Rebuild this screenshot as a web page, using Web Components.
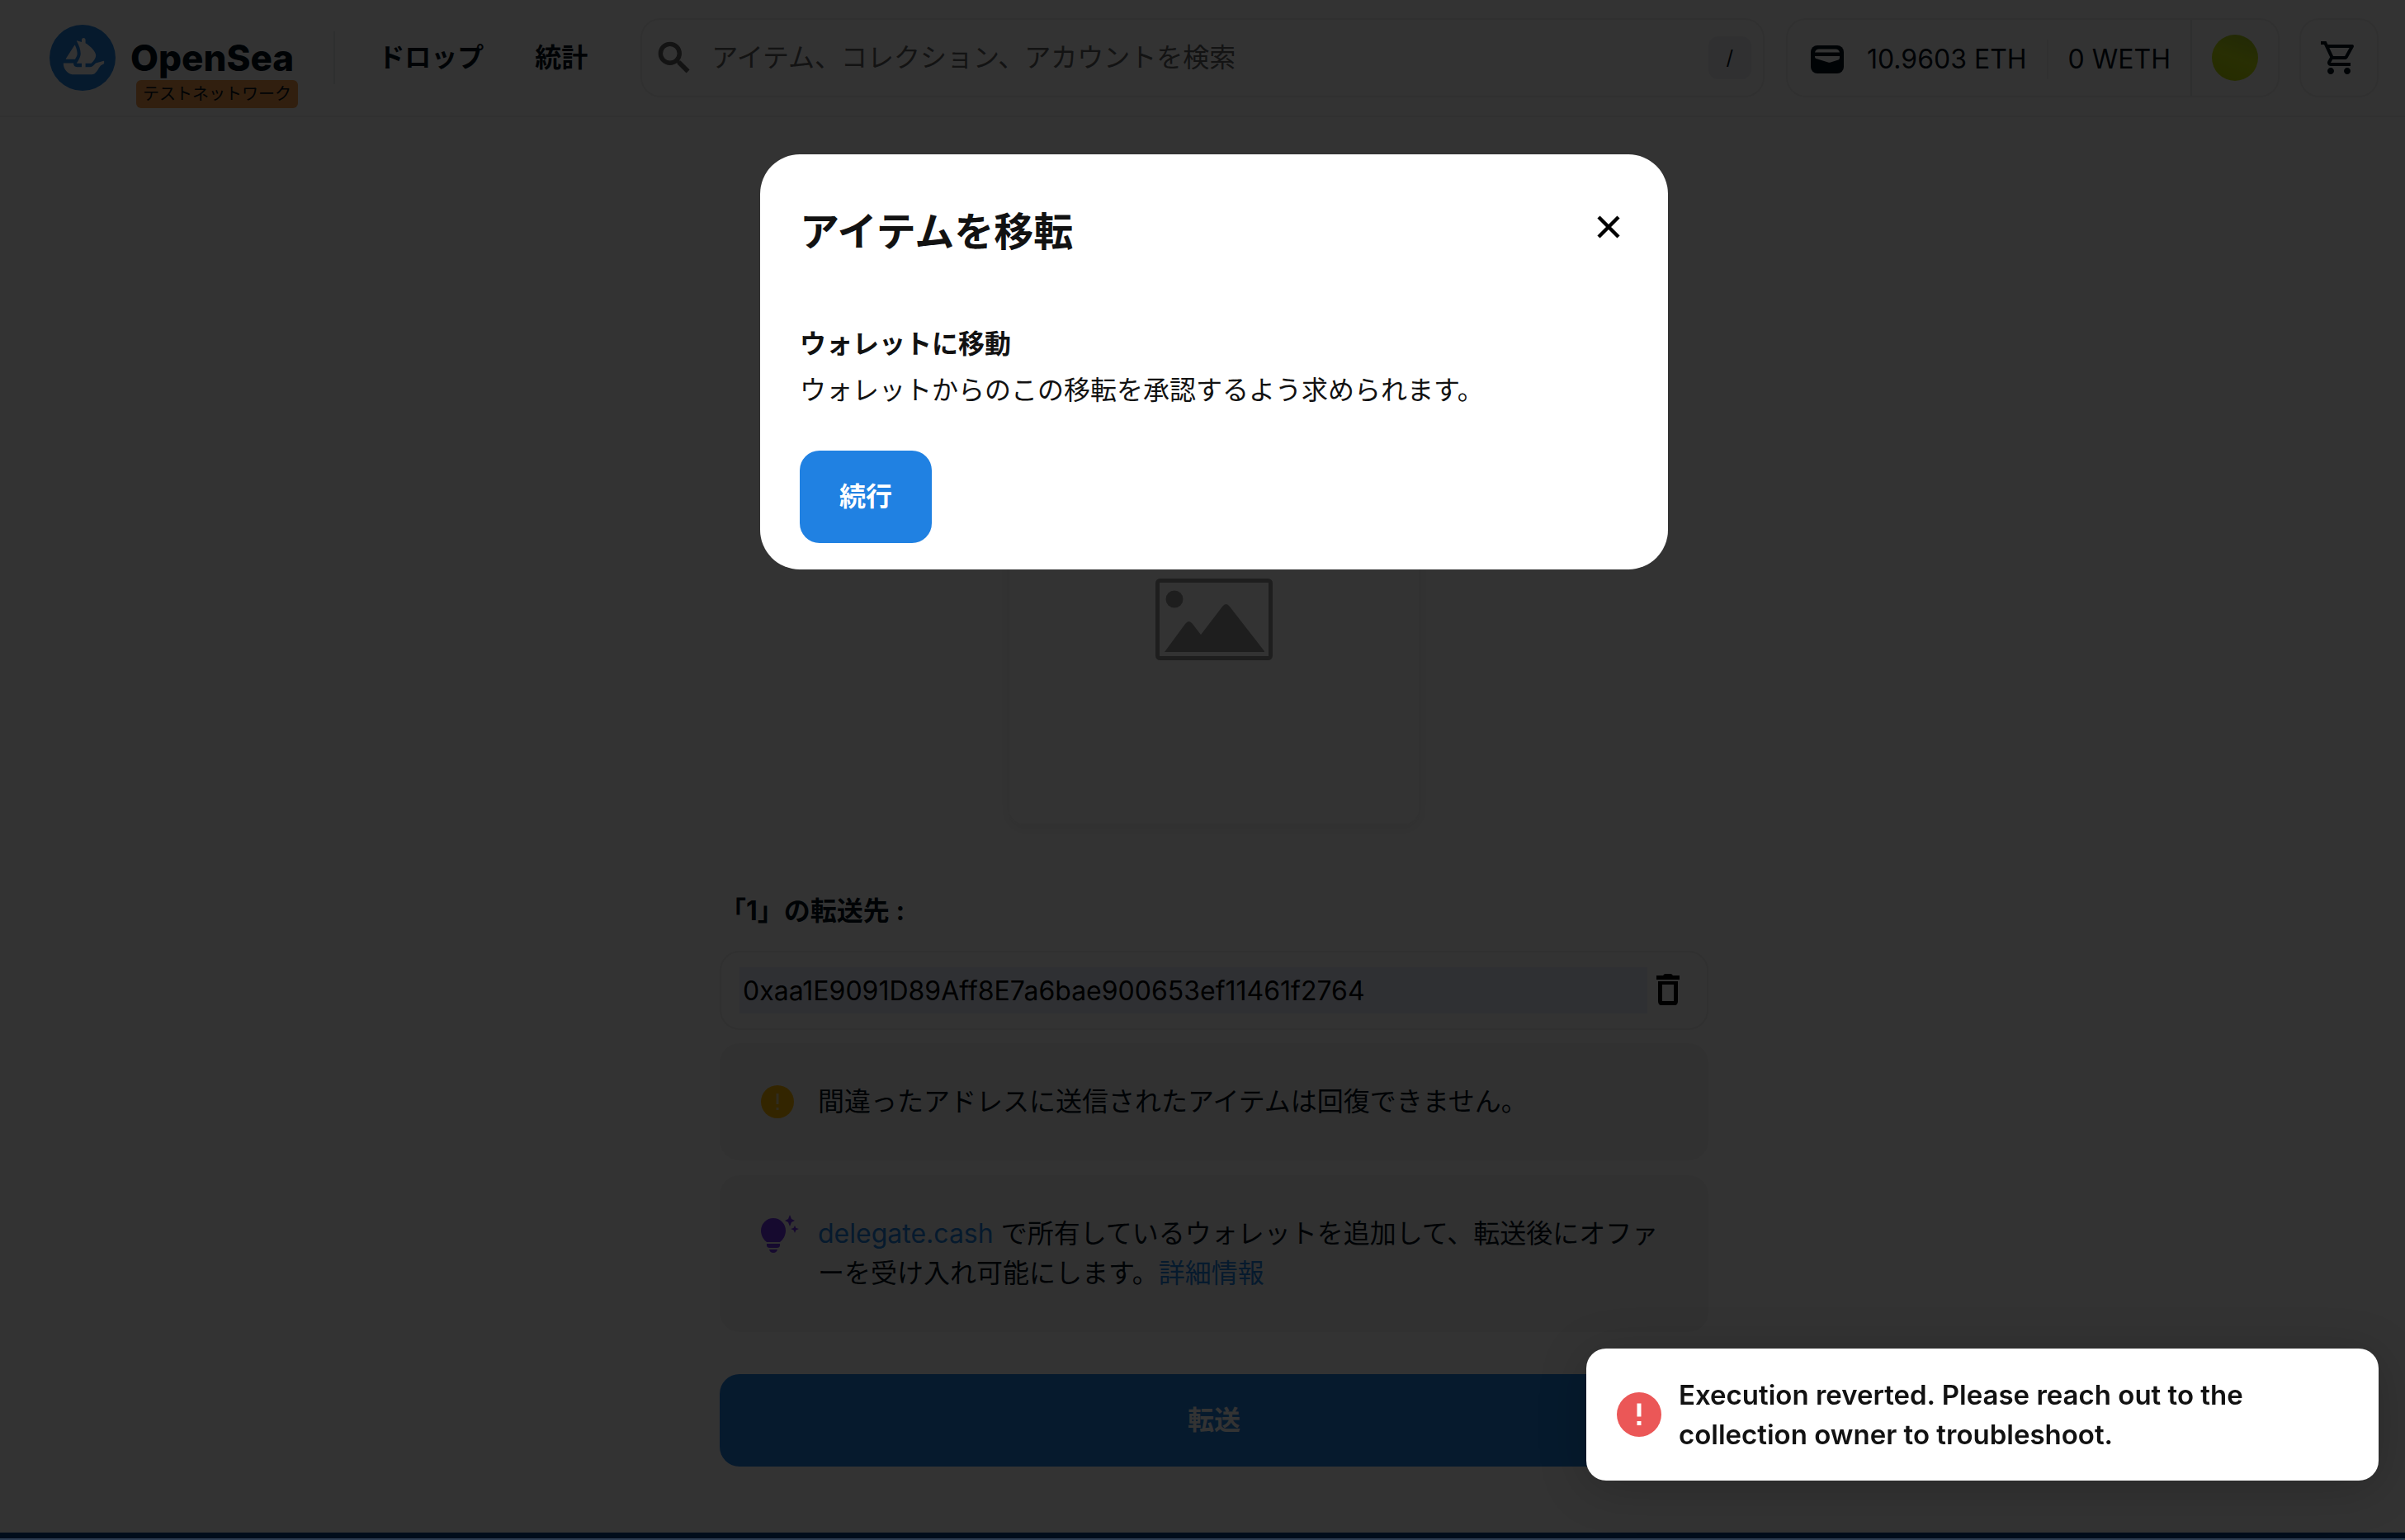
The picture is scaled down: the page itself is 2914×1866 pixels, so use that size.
<!DOCTYPE html>
<html lang="ja">
<head>
<meta charset="utf-8">
<title>OpenSea</title>
<style>
  body { margin: 0; background: #fff; color: #04111d; font: 400 32px/48px Inter, "Noto Sans CJK JP", sans-serif; }
</style>
</head>
<body>
<os-page></os-page>
<os-overlay>
  <os-modal heading="アイテムを移転">
    <strong slot="lead">ウォレットに移動</strong>
    <span slot="text">ウォレットからのこの移転を承認するよう求められます。</span>
    <os-button slot="action">続行</os-button>
  </os-modal>
</os-overlay>
<os-toast>Execution reverted. Please reach out to the collection owner to troubleshoot.</os-toast>

<script>
const define = (name, html, setup) => customElements.define(name, class extends HTMLElement {
  constructor() {
    super();
    this.attachShadow({ mode: 'open' });
  }
  connectedCallback() {
    const t = document.createElement('template');
    t.innerHTML = '<style>*{box-sizing:border-box}:host{display:block;box-sizing:border-box}</style>' + html;
    this.shadowRoot.replaceChildren(t.content.cloneNode(true));
    if (setup) setup(this, this.shadowRoot);
  }
});

const ICONS = {
  logo: ['0 0 90 90', '<circle cx="45" cy="45" r="45" fill="#2081e2"/><g fill="#fff"><path d="M22.2 46.5 34.1 27.9c.2-.3.6-.2.7 0 2 4.400 3.600 9.900 2.900 13.300-.4 1.400-1.300 3.200-2.800 5.700-.1.100-.2.200-.3.200h-12c-.4 0-.6-.3-.4-.6z"/><path d="M74.400 49.900v2.900c0 .2-.1.300-.3.400-.9.400-4 1.800-5.300 3.600-3.300 4.600-5.800 11.100-11.400 11.100H33.900C25.600 67.900 18.900 61.200 18.900 52.800v-.2c0-.3.200-.4.400-.4h13.100c.2 0 .4.200.4.500-.3 2.800 1.900 5 4.600 5h6.500v-5h-6.400c-.3 0-.5-.4-.4-.6 2.300-3.400 5.300-8.300 5.300-12.800 0-5.500-2.100-11.100-5.400-17.200-.2-.2 0-.5.300-.4l6.600 1.800v-2.900c0-3.500 5.100-3.500 5.100 0v4.300C56.500 29.500 63 36.500 63.200 41.500c0 4-3.200 8-6.400 11.200h-7.800v5h6.100c1.400 0 2.700-.5 3.800-1.400.4-.3 1.900-1.600 3.800-3.700l.3-.2 10.900-3.100c.3 0 .5.300.5.600z"/></g>'],
  search: ['0 0 24 24', '<path stroke="currentColor" stroke-width=".6" d="M15.500 14h-.79l-.28-.27A6.470 6.470 0 0 0 16 9.500 6.500 6.500 0 1 0 9.500 16c1.610 0 3.090-.59 4.230-1.570l.27.28v.79l5 4.990L20.490 19l-4.990-5zm-6 0C7.010 14 5 11.990 5 9.500S7.010 5 9.500 5 14 7.010 14 9.500 11.990 14 9.500 14z"/>'],
  wallet: ['0 0 40 34', '<rect width="40" height="34" rx="8"/><path d="M5 8.500q1-4 5-4h20q4 0 5 4zM5 13h30v2q0 1.500-1.500 2.500L24 20.500q-1.500.600-3 0L6.500 16q-1.500-.5-1.500-2z" fill="#fff"/>'],
  cart: ['0 0 24 24', '<path d="M15.550 13c.75 0 1.410-.41 1.750-1.030l3.580-6.490A.996.996 0 0 0 20.010 4H5.210l-.94-2H1v2h2l3.600 7.590-1.350 2.440C4.520 15.370 5.480 17 7 17h12v-2H7l1.100-2h7.450zM6.160 6h12.150l-2.760 5H8.530L6.160 6zM7 18c-1.100 0-1.990.9-1.990 2S5.900 22 7 22s2-.9 2-2-.9-2-2-2zm10 0c-1.100 0-1.990.9-1.990 2s.89 2 1.990 2 2-.9 2-2-.9-2-2-2z"/>'],
  image: ['0 0 142 99', '<rect x="2.500" y="2.500" width="137" height="94" rx="3" fill="none" stroke="currentColor" stroke-width="5"/><circle cx="23" cy="25" r="10.500"/><path d="M11 89 36 55q4.500-6 9 0l10 13 26-34q4.500-6 9 0l42 54v1z"/>'],
  trash: ['0 0 28 38', '<path d="M0 2h8l2-2h8l2 2h8v5H0zM2 9h24v24q0 5-4 5H6q-4 0-4-5zm5 4v20h14V13z" fill-rule="evenodd"/>'],
  warn: ['0 0 40 40', '<circle cx="20" cy="20" r="20"/><path d="M18.500 10h3v13h-3zM18.500 27h3v3h-3z" fill="#e8d9a0"/>'],
  bulb: ['0 0 46 46', '<path d="M15 4a15 15 0 0 0-15 15c0 6 3 11 7 14h16c4-3 7-8 7-14A15 15 0 0 0 15 4zM7 35h16q1 5-4 5h-8q-5 0-4-5zM10 42h10q-1 4-5 4t-5-4zM35 0l2 5 4 2-4 2-2 5-2-5-4-2 4-2zM41 13l1.500 3 3.500 1-3.500 1.500L41 22l-1.500-3.500L36 17l3.500-1z"/>'],
  close: ['0 0 28 28', '<path d="M2 2 26 26M26 2 2 26" fill="none" stroke="currentColor" stroke-width="4.500"/>'],
  error: ['0 0 54 54', '<circle cx="27" cy="27" r="27"/><path d="M24.500 13.500h5v16h-5zM24.500 35h5v5h-5z" fill="#fff"/>']
};
define('os-icon', '<style>:host{display:inline-block;flex:none;line-height:0}svg{display:block;width:100%;fill:currentColor}</style><svg aria-hidden="true"></svg>', (el, root) => {
  const [box, art] = ICONS[el.getAttribute('name')];
  const svg = root.querySelector('svg');
  svg.setAttribute('viewBox', box);
  svg.innerHTML = art;
});

define('os-button', `<style>
  button{display:block;width:100%;height:112px;padding:0 48px;border:0;border-radius:24px;background:#2081e2;color:#fff;font:inherit;font-weight:700}
</style><button type="button"><slot></slot></button>`);

define('os-header', `<style>
  :host{border-bottom:2px solid #f1f1f1}
  header{display:flex;align-items:center;height:140px;padding:0 32px 0 60px}
  a{color:inherit;text-decoration:none}
  .brand{display:flex;align-items:center;gap:18px}
  .brand os-icon{width:80px}
  .word{position:relative;font-size:44px;font-weight:800}
  .badge{position:absolute;top:51px;left:7px;height:34px;padding:0 8px;border-radius:6px;background:#f2994a;font-size:20px;line-height:34px;font-weight:400;white-space:nowrap}
  .rule{width:2px;height:64px;margin:0 52px 0 48px;background:#e5e8eb}
  nav{display:flex;gap:62px;font-weight:700;margin-right:64px}
  .box{display:flex;align-items:center;height:96px;border:2px solid #efefef;border-radius:24px}
  .search{flex:1;gap:20px;padding:0 14px}
  .search os-icon{width:50px;color:#606060}
  .search input{flex:1;min-width:0;border:0;padding:0;background:none;outline:0;font:inherit;color:inherit}
  .search input::placeholder{color:#606060;opacity:1}
  kbd{width:52px;height:52px;border-radius:12px;background:#eeeef4;text-align:center;font:400 24px/52px Inter,sans-serif}
  .wallet{margin:0 24px 0 26px}
  .wallet os-icon{width:40px}
  .money{display:flex;align-items:center;height:100%;padding:4px 24px 0 28px;border-right:2px solid #e5e8eb}
  .money os-icon{margin-right:28px}
  .eth{padding-right:24px;border-right:2px solid #eee}
  .weth{padding-left:24px}
  .me{width:56px;height:56px;margin:0 24px;padding:0;border:0;border-radius:50%;background:linear-gradient(20deg,#b8d800,#c8e810 50%,#a6c820)}
  .cart{justify-content:center;width:96px;padding:0;background:none;color:inherit}
  .cart os-icon{width:48px}
</style>
<header>
  <a class="brand" href="#"><os-icon name="logo"></os-icon><span class="word">OpenSea<span class="badge">テストネットワーク</span></span></a>
  <span class="rule"></span>
  <nav><a href="#">ドロップ</a><a href="#">統計</a></nav>
  <label class="box search"><os-icon name="search"></os-icon><input type="text" placeholder="アイテム、コレクション、アカウントを検索" aria-label="検索"><kbd>/</kbd></label>
  <div class="box wallet"><div class="money"><os-icon name="wallet"></os-icon><span class="eth">10.9603 ETH</span><span class="weth">0 WETH</span></div><button class="me" type="button" aria-label="アカウント"></button></div>
  <button class="box cart" type="button" aria-label="カート"><os-icon name="cart"></os-icon></button>
</header>`);

define('os-note', `<style>
  :host{padding:47px 46px 47px 50px;border-radius:24px;background:#f6f6f6}
  .row{display:flex;align-items:flex-start}
  .mark{flex:none;width:69px;height:48px;display:flex;align-items:center}
  p{margin:0}
</style><div class="row"><span class="mark"><slot name="icon"></slot></span><p><slot></slot></p></div>`);

define('os-transfer', `<style>
  form{display:flex;flex-direction:column;width:1198px;max-width:100%;margin:0 auto}
  .card{align-self:center;display:grid;place-items:center;width:500px;height:500px;margin-bottom:80px;border:2px solid #f6f6f6;border-radius:20px;box-shadow:0 4px 16px #00000014;color:#989898}
  .card os-icon{width:142px}
  label{font-weight:700}
  .field{display:flex;align-items:center;gap:10px;height:96px;margin:24px 0 16px;padding:0 32px 0 22px;border:2px solid #eee;border-radius:24px}
  input{flex:1;min-width:0;height:56px;padding:0 4px;border:0;background:#e8f0fe;font:inherit;color:#000}
  .field button{width:30px;padding:0;border:0;background:none;color:#000}
  .field os-icon{width:28px}
  .notes{display:grid;gap:18px;margin-bottom:51px}
  .warn{width:40px;color:#ffb703}
  .bulb{width:46px;color:#7033e8}
  a{color:#2081e2;text-decoration:none}
</style>
<form>
  <div class="card"><os-icon name="image"></os-icon></div>
  <label for="to">「1」の転送先 :</label>
  <div class="field"><input id="to" type="text" value="0xaa1E9091D89Aff8E7a6bae900653ef11461f2764"><button type="button" aria-label="クリア"><os-icon name="trash"></os-icon></button></div>
  <div class="notes">
    <os-note><os-icon class="warn" slot="icon" name="warn"></os-icon>間違ったアドレスに送信されたアイテムは回復できません。</os-note>
    <os-note><os-icon class="bulb" slot="icon" name="bulb"></os-icon><a href="#">delegate.cash</a> で所有しているウォレットを追加して、転送後にオファーを受け入れ可能にします。<a href="#">詳細情報</a></os-note>
  </div>
  <os-button>転送</os-button>
</form>`);

define('os-page', `<style>
  :host{display:flex;flex-direction:column;min-height:100vh}
  main{flex:1;padding:358px 0 64px 28px}
  footer{height:9px;background:#054187}
</style><os-header></os-header><main><os-transfer></os-transfer></main><footer></footer>`);

define('os-overlay', `<style>
  :host{position:fixed;inset:0;display:flex;justify-content:center;align-items:flex-start;padding:187px 0 0 28px;background:#000c;border-bottom:2px solid #2e3d52}
</style><slot></slot>`);

define('os-modal', `<style>
  :host{width:1100px;max-width:100%;padding:48px 48px 32px;border-radius:48px;background:#fff;color:#121212}
  header{display:flex;justify-content:space-between;align-items:flex-start;margin-bottom:80px}
  h2{margin:0;padding-top:14px;font-size:48px;line-height:64px;font-weight:700}
  button{width:48px;height:48px;margin-top:16px;padding:0;border:0;background:none;color:#000;display:grid;place-items:center}
  button os-icon{width:28px}
  .body{display:flex;flex-direction:column;align-items:flex-start;gap:8px}
  ::slotted(os-button){margin-top:41px}
</style><section role="dialog">
  <header><h2></h2><button type="button" aria-label="閉じる"><os-icon name="close"></os-icon></button></header>
  <div class="body"><slot name="lead"></slot><slot name="text"></slot><slot name="action"></slot></div>
</section>`, (el, root) => { root.querySelector('h2').textContent = el.getAttribute('heading'); });

define('os-toast', `<style>
  :host{position:fixed;right:32px;bottom:72px;display:flex;align-items:center;gap:21px;width:960px;max-width:100%;padding:32px 120px 32px 37px;border-radius:24px;background:#fff;color:#121212;font-size:33px;font-weight:600;box-shadow:0 8px 60px #0003}
  os-icon{width:54px;color:#eb5757}
</style><os-icon name="error"></os-icon><span role="alert"><slot></slot></span>`);
</script>
</body>
</html>
